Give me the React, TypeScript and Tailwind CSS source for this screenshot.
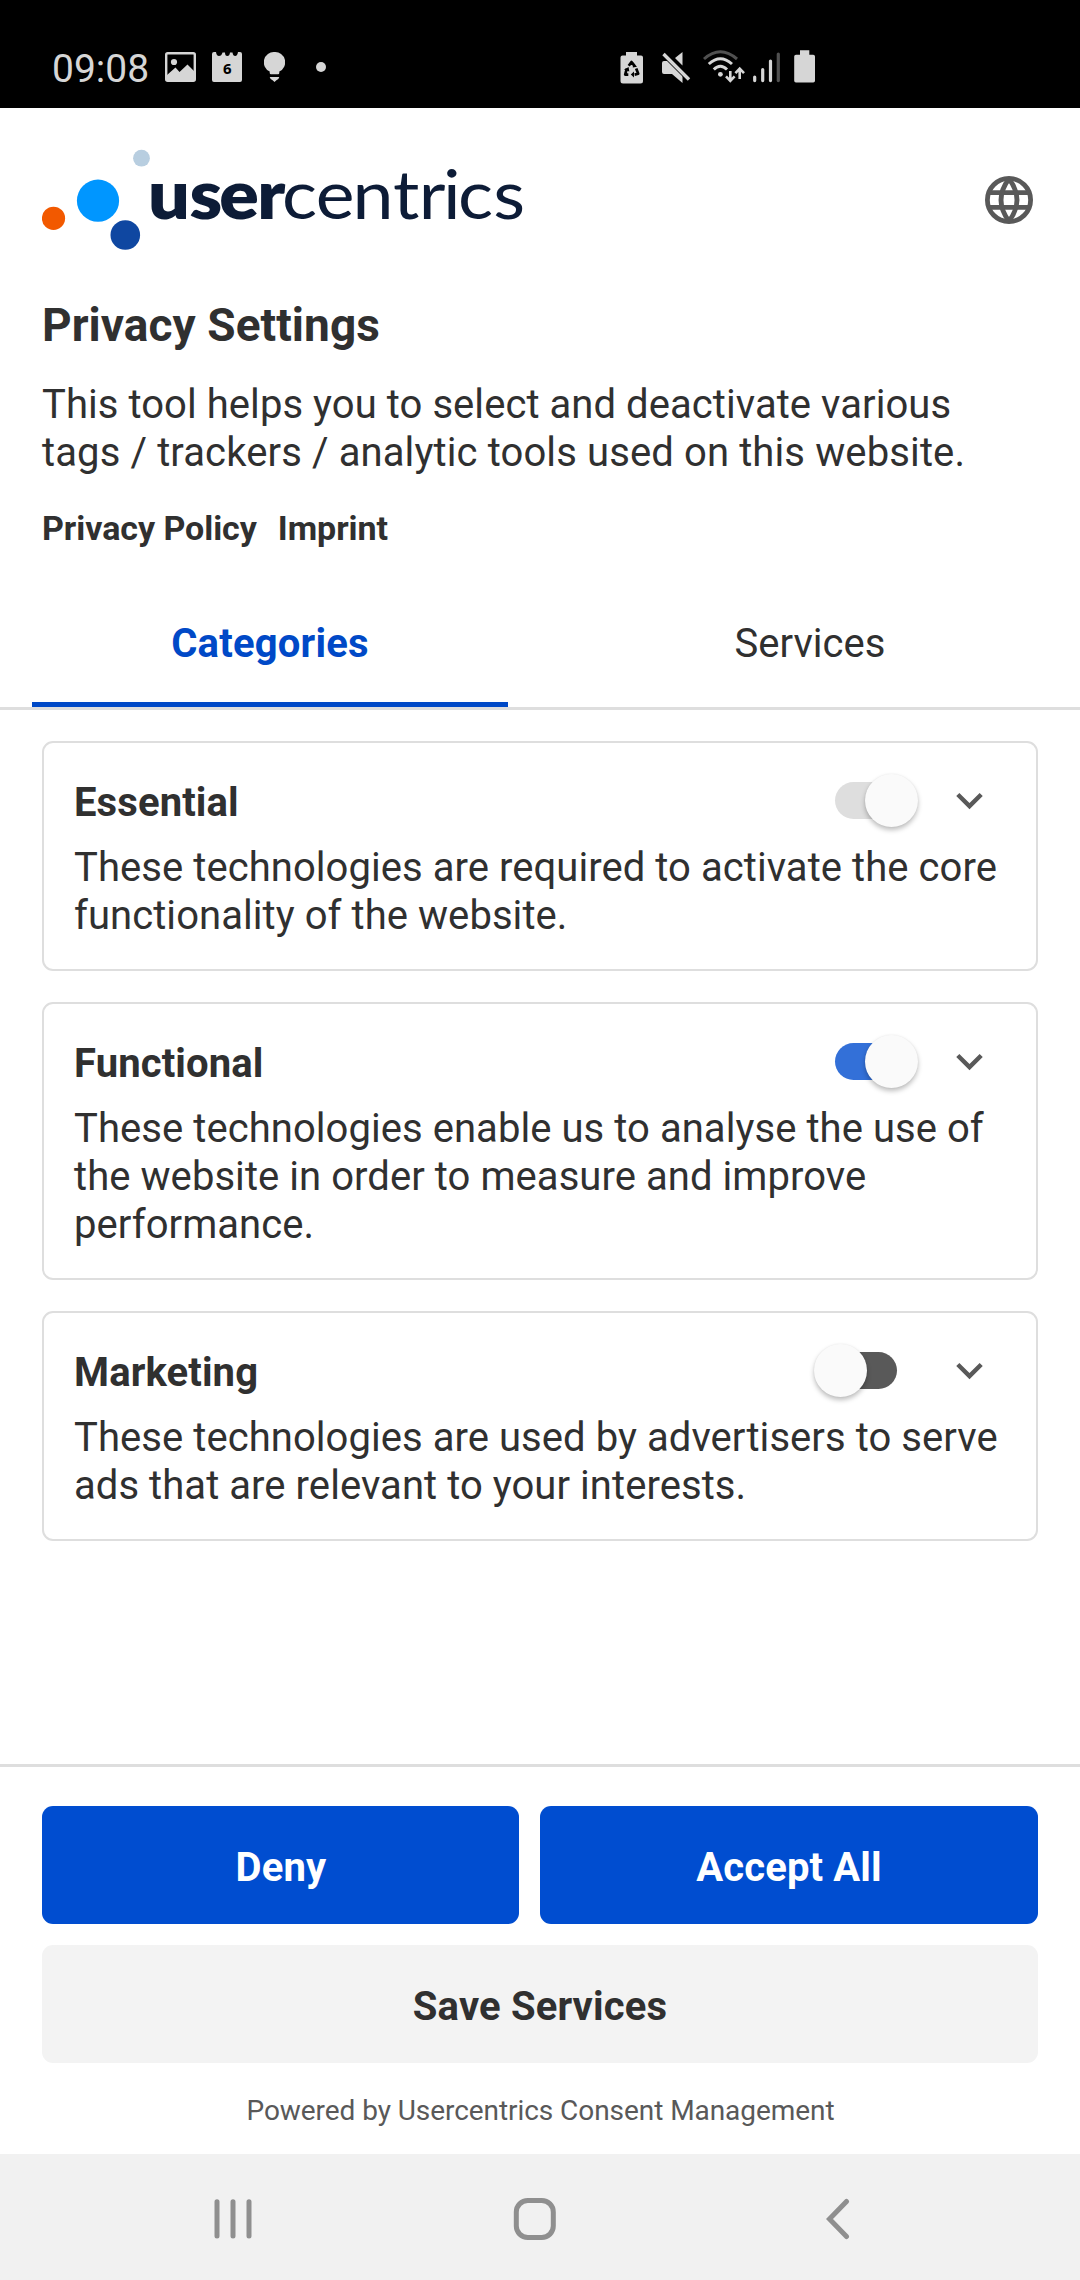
import { useState, type ReactNode } from 'react';
import { MdExpandMore } from 'react-icons/md';

type ToggleState = 'locked' | 'on' | 'off';

function StatusBar() {
  return (
    <div className="flex h-[108px] justify-between bg-black pl-[52px] pt-[44px] text-[#d6d6d6]">
      <div className="flex h-[46px] items-center">
        <span className="w-[113px] pt-[3px] text-[39px] leading-[46px] font-normal">09:08</span>
        <svg className="h-[30px] w-[31px]" viewBox="0 0 31 30" fill="none">
          <rect x="1.2" y="1.2" width="28.6" height="27.6" rx="1.5" stroke="currentColor" strokeWidth="2.4" />
          <circle cx="9" cy="10" r="3.1" fill="currentColor" />
          <path d="M2 23 L10.5 15.5 L14.5 20 L22.5 12.5 L29 19 V28.5 H2 Z" fill="currentColor" />
        </svg>
        <svg className="ml-[16px] h-[30px] w-[30px]" viewBox="0 0 30 30">
          <path d="M2 0 H4 Q4.5 4 7 4 T10.5 0.5 H13 Q13 4 15.3 4 T18 0.5 H20.5 Q21 4 23.2 4 T26 0 H28 Q30 0 30 2 V28 Q30 30 28 30 H2 Q0 30 0 28 V2 Q0 0 2 0 Z" fill="currentColor" />
          <text x="15.2" y="22" textAnchor="middle" fontSize="15" fontWeight="700" fontFamily="Noto Sans" fill="#000">6</text>
        </svg>
        <svg className="ml-[22px] h-[30px] w-[21px]" viewBox="0 0 21 30" fill="currentColor">
          <path d="M10.5 0 A10.3 10.3 0 0 0 5.7 19.6 V21 Q5.7 22.3 7 22.3 H14 Q15.3 22.3 15.3 21 V19.6 A10.3 10.3 0 0 0 10.5 0 Z" />
          <path d="M5.7 25 H15.3 Q14.8 27.6 12.4 28.2 L10.5 30 L8.6 28.2 Q6.2 27.6 5.7 25 Z" />
        </svg>
        <span className="ml-[31px] size-[10px] rounded-full bg-[#d6d6d6]" />
      </div>
      <div className="flex h-[46px] w-[460px] items-center">
        <svg className="h-[34px] w-[200px]" viewBox="620 50 200 34" fill="none">
          <path d="M626 52 H637 V55.5 H641 Q643 55.5 643 57.5 V81 Q643 83.5 640.5 83.5 H623 Q620.5 83.5 620.5 81 V57.5 Q620.5 55.5 622.5 55.5 H626 Z" fill="currentColor" />
          <path d="M628.7 65.8 L631.5 62 L634.4 65.8 M636.2 68.5 L638.2 73.8 L634.6 74.6 M628.3 74.6 H625.2 L626.8 68.5" stroke="#000" strokeWidth="2.7" strokeLinejoin="round" />
          <path d="M633 62.2 L637 66.8 L632.8 67.4 Z M634 71.5 L634 77.6 L630.8 74.6 Z M624 69.8 L628.6 67 L629.3 71.5 Z" fill="#000" />
          <path d="M664 61 H670 L682.5 73 V83 L672 74 H664 Q662 74 662 72 V63 Q662 61 664 61 Z M682.5 52 V65.5 L675 58 Z" fill="currentColor" />
          <path d="M663.5 54 L689 79.5" stroke="#000" strokeWidth="5" />
          <path d="M663.5 54 L689 79.5" stroke="currentColor" strokeWidth="3.4" />
          <path d="M704 59 Q720.3 44.5 737 59" stroke="#505050" strokeWidth="3" />
          <path d="M708.8 64 Q720.3 53.5 732 64" stroke="currentColor" strokeWidth="3" />
          <path d="M713.8 69.5 Q720.3 63 727 69.5" stroke="currentColor" strokeWidth="3" />
          <circle cx="720.4" cy="74.3" r="2.4" fill="currentColor" />
          <path d="M730.3 71 V80 M726 76.3 L730.3 80.8 L734.6 76.3 M739.7 79 V69.5 M735.4 73.2 L739.7 68.7 L744 73.2" stroke="currentColor" strokeWidth="2.6" />
          <path d="M754.7 77 V80.6 M762.7 69.5 V80.6 M770.5 61 V80.6" stroke="currentColor" strokeWidth="3.2" strokeLinecap="round" />
          <path d="M778.3 54 V80.6" stroke="#505050" strokeWidth="3.2" strokeLinecap="round" />
          <path d="M800 50.3 H809.3 V54.7 H813.2 Q815 54.7 815 56.5 V80.7 Q815 82.5 813.2 82.5 H796 Q794.2 82.5 794.2 80.7 V56.5 Q794.2 54.7 796 54.7 H800 Z" fill="currentColor" />
        </svg>
      </div>
    </div>
  );
}

function Logo() {
  return (
    <svg className="h-[104px] w-[484px]" viewBox="42 148 484 104" role="img" aria-label="usercentrics">
      <circle cx="53.5" cy="218.3" r="11.6" fill="#f25900" />
      <circle cx="98" cy="200.7" r="21.1" fill="#0096ff" />
      <circle cx="125.3" cy="235" r="14.8" fill="#0f47a1" />
      <circle cx="141.5" cy="158.2" r="8.4" fill="#b8cee0" />
      <g fill="#0d1c37" fontFamily="Lato" transform="scale(1.08 1)">
        <text x="137 175.4 203 238.3" y="218.7" fontSize="68" fontWeight="800">user</text>
        <text x="261 292.4 326.4 363.8 387.7 410.3 424 456.7" y="218.7" fontSize="68" fontWeight="400">centrics</text>
      </g>
    </svg>
  );
}

function Globe() {
  return (
    <svg className="size-[58px] text-[#595959]" viewBox="0 0 58 58" fill="none" stroke="currentColor" strokeWidth="4.8">
      <circle cx="29" cy="29" r="21.6" />
      <path d="M9 21.7 H49 M9 36.3 H49" />
      <path d="M29 7.8 Q13 29 29 50.2 M29 7.8 Q45 29 29 50.2" />
    </svg>
  );
}

function Tab({ label, active, onClick }: { label: string; active: boolean; onClick: () => void }) {
  return (
    <button onClick={onClick} className="flex flex-col px-8">
      <span
        className={
          active
            ? 'flex h-[116px] w-full items-center justify-center text-[40px] leading-[48px] font-bold tracking-[0.2px] text-[#0049c7]'
            : 'flex h-[116px] w-full items-center justify-center text-[40px] leading-[48px]'
        }
      >
        {label}
      </span>
      <span className={active ? 'h-[5px] w-full bg-[#0049c7]' : 'h-[5px] w-full'} />
    </button>
  );
}

function Toggle({ state, onClick }: { state: ToggleState; onClick: () => void }) {
  const track = {
    locked: 'justify-end bg-[#dedede]',
    on: 'justify-end bg-[#3370d8]',
    off: 'justify-start bg-[#595959]',
  }[state];
  return (
    <button
      role="switch"
      aria-checked={state !== 'off'}
      disabled={state === 'locked'}
      onClick={onClick}
      className={`flex h-[37px] w-[62px] items-center rounded-full ${track}`}
    >
      <span
        className={
          state === 'off'
            ? '-ml-[21px] size-[53px] shrink-0 rounded-full bg-[#fafafa] shadow-[0_3px_5px_rgba(0,0,0,0.26),0_0_2px_rgba(0,0,0,0.06)]'
            : '-mr-[21px] size-[53px] shrink-0 rounded-full bg-[#fafafa] shadow-[0_3px_5px_rgba(0,0,0,0.26),0_0_2px_rgba(0,0,0,0.06)]'
        }
      />
    </button>
  );
}

function CategoryCard({ title, initial, children }: { title: string; initial: ToggleState; children: ReactNode }) {
  const [state, setState] = useState<ToggleState>(initial);
  return (
    <section className="rounded-[11px] border-2 border-[#dedede] pt-[30px] pr-[26px] pb-[29px] pl-[30px]">
      <div className="flex h-[55px] items-center">
        <h2 className="flex-1 pt-[5px] text-[40px] leading-[48px] font-bold tracking-[0.12px]">{title}</h2>
        <Toggle state={state} onClick={() => setState(state === 'on' ? 'off' : 'on')} />
        <MdExpandMore className="mr-[14px] ml-[46px] size-[53px] text-[#595959]" />
      </div>
      <p className="mt-[16px] text-[40px] leading-[48px] tracking-[0.06px]">{children}</p>
    </section>
  );
}

function NavigationBar() {
  return (
    <nav className="flex h-[126px] items-center bg-[#f1f1f1] pt-[4px] pl-[213px] text-[#8f8f8f]">
      <svg className="h-[44px] w-[40px]" viewBox="0 0 40 44" stroke="currentColor" strokeWidth="5" strokeLinecap="round">
        <path d="M4 4.7 V39 M20 4.7 V39 M36 4.7 V39" />
      </svg>
      <svg className="ml-[260px] h-[44px] w-[44px]" viewBox="0 0 44 44" fill="none" stroke="currentColor" strokeWidth="5">
        <rect x="3.3" y="3.5" width="37" height="37" rx="11.5" />
      </svg>
      <svg className="ml-[269px] h-[44px] w-[24px]" viewBox="0 0 24 44" fill="none" stroke="currentColor" strokeWidth="5" strokeLinecap="round">
        <path d="M20.5 4.5 L3.5 22 L20.5 39.5" />
      </svg>
    </nav>
  );
}

export default function App() {
  const [tab, setTab] = useState<'categories' | 'services'>('categories');
  return (
    <div className="flex h-[2280px] w-[1080px] flex-col bg-white font-[Roboto,sans-serif] text-[#303030]">
      <StatusBar />
      <header className="px-[42px] pt-[40px]">
        <div className="flex h-[104px] items-center justify-between">
          <Logo />
          <Globe />
        </div>
        <h1 className="mt-[46px] text-[46px] leading-[54px] font-bold tracking-[0.06px]">Privacy Settings</h1>
        <p className="mt-[29px] text-[40px] leading-[48px]">
          <span className="tracking-[0.06px]">This tool helps you to select and deactivate various</span>
          <br />
          <span className="tracking-[0.12px]">tags / trackers / analytic tools used on this website.</span>
        </p>
        <div className="mt-[31px] flex gap-[21px] text-[34px] leading-[40px] font-bold tracking-[-0.05px]">
          <a>Privacy Policy</a>
          <a>Imprint</a>
        </div>
      </header>
      <div className="mt-[38px] grid grid-cols-2 border-b-[3px] border-[#dedede]">
        <Tab label="Categories" active={tab === 'categories'} onClick={() => setTab('categories')} />
        <Tab label="Services" active={tab === 'services'} onClick={() => setTab('services')} />
      </div>
      <main className="flex flex-1 flex-col gap-[31px] px-[42px] pt-[31px]">
        <CategoryCard title="Essential" initial="locked">
          These technologies are required to activate the core
          <br />
          functionality of the website.
        </CategoryCard>
        <CategoryCard title="Functional" initial="on">
          These technologies enable us to analyse the use of
          <br />
          the website in order to measure and improve
          <br />
          performance.
        </CategoryCard>
        <CategoryCard title="Marketing" initial="off">
          These technologies are used by advertisers to serve
          <br />
          ads that are relevant to your interests.
        </CategoryCard>
      </main>
      <footer className="flex h-[390px] flex-col border-t-[3px] border-[#dedede] px-[42px] pt-[39px]">
        <div className="flex gap-[21px] text-[40px] leading-[48px] font-bold tracking-[0.15px] text-white">
          <button className="h-[118px] w-[477px] rounded-[11px] bg-[#004dd0] pt-[6px] pl-px">Deny</button>
          <button className="h-[118px] flex-1 rounded-[11px] bg-[#004dd0] pt-[6px]">Accept All</button>
        </div>
        <button className="mt-[21px] h-[118px] rounded-[11px] bg-[#f3f3f3] pt-[6px] text-[40px] leading-[48px] font-bold tracking-[0.15px]">
          Save Services
        </button>
        <p className="mt-[30px] pl-px text-center text-[28px] leading-[36px] tracking-[-0.06px] text-[#595959]">
          Powered by Usercentrics Consent Management
        </p>
      </footer>
      <NavigationBar />
    </div>
  );
}
